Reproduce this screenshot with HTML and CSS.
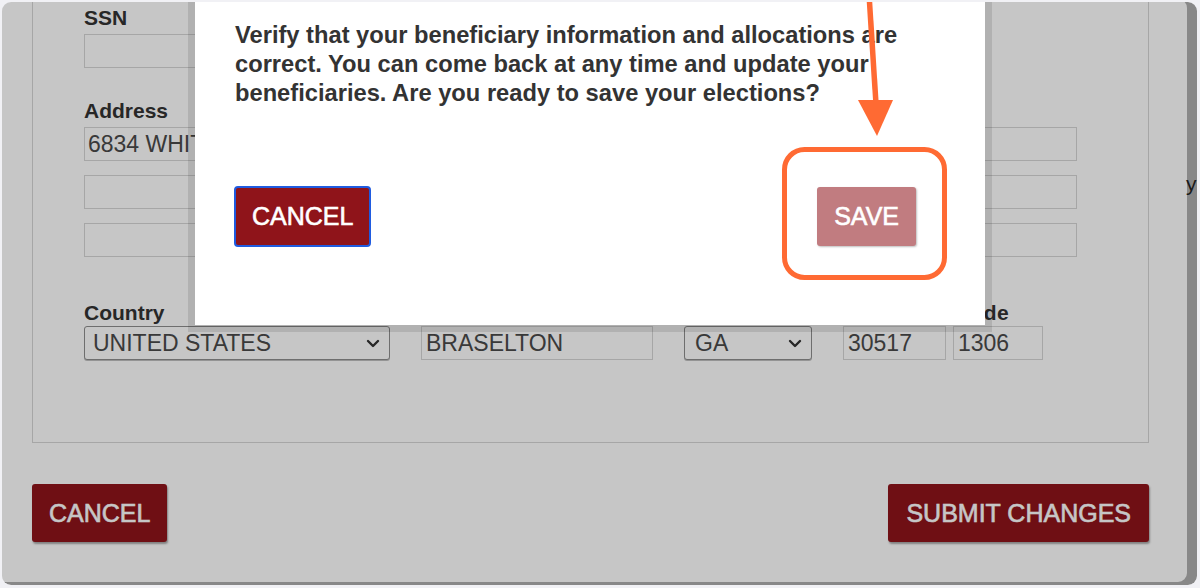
FILE: index.html
```html
<!DOCTYPE html>
<html lang="en">
<head>
<meta charset="utf-8">
<title>Beneficiaries</title>
<link rel="stylesheet" href="styles.css">
</head>
<body>
<div class="frame">
  <div class="page">
    <div class="main">
      <section class="panel">
        <div class="field">
          <label class="lbl">SSN</label>
          <input class="inp ssn" type="text" value="">
        </div>
        <div class="field address">
          <label class="lbl">Address</label>
          <input class="inp wide" type="text" value="6834 WHITEHALL DR">
          <input class="inp wide gap" type="text" value="">
          <input class="inp wide gap" type="text" value="">
        </div>
        <div class="geo">
          <div class="col">
            <label class="lbl">Country</label>
            <div class="select w-country"><span>UNITED STATES</span><svg class="chev" viewBox="0 0 14 9" width="14" height="9"><polyline points="2,2 7,7 12,2"/></svg></div>
          </div>
          <div class="col">
            <label class="lbl">City</label>
            <input class="inp w-city" type="text" value="BRASELTON">
          </div>
          <div class="col">
            <label class="lbl">State</label>
            <div class="select w-state"><span>GA</span><svg class="chev" viewBox="0 0 14 9" width="14" height="9"><polyline points="2,2 7,7 12,2"/></svg></div>
          </div>
          <div class="col">
            <label class="lbl lbl-zip">Zip/Postal Code</label>
            <div class="zip-pair">
              <input class="inp w-zip" type="text" value="30517">
              <input class="inp w-zip4" type="text" value="1306">
            </div>
          </div>
        </div>
      </section>
      <div class="actions">
        <button class="btn">CANCEL</button>
        <button class="btn btn-wide">SUBMIT CHANGES</button>
      </div>
    </div>
    <aside class="aside">y</aside>
  </div>

  <div class="overlay"></div>

  <div class="modal">
    <p class="modal-text">Verify that your beneficiary information and allocations are correct. You can come back at any time and update your beneficiaries. Are you ready to save your elections?</p>
    <div class="modal-footer">
      <button class="btn btn-focus">CANCEL</button>
      <button class="btn btn-disabled">SAVE</button>
    </div>
  </div>

  <svg class="annot" viewBox="0 0 1200 588" width="1200" height="588">
    <line x1="869" y1="-6" x2="876" y2="104" class="arrow-line"/>
    <polygon points="858,100 893,100 877,136" class="arrow-head"/>
    <rect x="784.5" y="149.5" width="160" height="128" rx="20" class="highlight"/>
  </svg>
</div>
</body>
</html>
```

FILE: styles.css
```css
html, body {
  margin: 0;
  padding: 0;
}

body {
  background: #f1f1f5;
  font-family: "Liberation Sans", Arial, Helvetica, sans-serif;
  overflow: hidden;
}

.frame {
  position: relative;
  margin: 2px 0 0 2px;
  width: 1195px;
  height: 583px;
  border-radius: 9px;
  overflow: hidden;
  background: #ffffff;
}

.frame::after {
  content: "";
  position: absolute;
  inset: 0;
  border-radius: inherit;
  box-shadow: inset -10px -3px 0 rgba(0, 0, 0, 0.31);
  pointer-events: none;
  z-index: 20;
}

/* page behind the dialog */
.page {
  display: flex;
  align-items: flex-start;
  gap: 38px;
  padding-left: 30px;
  margin-top: -20px;
}

.main {
  flex: none;
  width: 1117px;
}

.panel {
  border: 1px solid #d6d6d6;
  padding: 23px 0 82px 51px;
}

.lbl {
  display: block;
  font-weight: bold;
  font-size: 21px;
  line-height: 24px;
  color: #333333;
  margin-bottom: 4px;
  white-space: nowrap;
}

.lbl-zip {
  letter-spacing: 0.5px;
}

.field.address {
  margin-top: 31px;
}

.inp {
  display: block;
  box-sizing: border-box;
  height: 34px;
  border: 1px solid #d6d6d6;
  border-radius: 0;
  background: #ffffff;
  padding: 0 4px;
  margin: 0;
  font-family: "Liberation Sans", Arial, sans-serif;
  font-size: 23px;
  color: #4a4a4a;
  outline: none;
}

.ssn {
  width: 300px;
}

.wide {
  width: 993px;
  padding-left: 3px;
}

.wide.gap {
  margin-top: 14px;
}

.geo {
  display: flex;
  gap: 31px;
  margin-top: 44px;
}

.geo .lbl {
  margin-bottom: 1px;
}

.select {
  box-sizing: border-box;
  height: 34px;
  display: flex;
  align-items: center;
  justify-content: space-between;
  border: 1px solid #8e8e8e;
  border-radius: 3px;
  box-shadow: 0 1px 0 rgba(0, 0, 0, 0.25);
  background: #ffffff;
  padding: 0 9px 0 8px;
  font-size: 23px;
  color: #4a4a4a;
}

.chev polyline {
  fill: none;
  stroke: #333333;
  stroke-width: 2.4;
  stroke-linecap: round;
  stroke-linejoin: round;
}

.w-country { width: 306px; }
.w-city { width: 232px; }
.w-state { width: 128px; padding-left: 10px; }
.w-zip { width: 103px; }
.w-zip4 { width: 90px; }

.zip-pair {
  display: flex;
  gap: 7px;
}

.actions {
  display: flex;
  justify-content: space-between;
  margin-top: 41px;
}

.btn {
  border: 0;
  border-radius: 3px;
  background: #8f141a;
  color: #ffffff;
  font-family: "Liberation Sans", Arial, sans-serif;
  font-weight: normal;
  font-size: 25px;
  -webkit-text-stroke: 0.6px #ffffff;
  line-height: 28px;
  padding: 15px 17px;
  margin: 0;
  box-shadow: 1px 2px 2px rgba(0, 0, 0, 0.35);
  white-space: nowrap;
}

.btn-wide {
  padding: 15px 18px;
}

.aside {
  flex: none;
  padding-top: 190px;
  margin-left: -1px;
  font-size: 21px;
  line-height: 24px;
  color: #333333;
  white-space: nowrap;
}

/* dim layer */
.overlay {
  position: absolute;
  inset: 0;
  background: rgba(0, 0, 0, 0.224);
}

/* dialog */
.modal {
  position: absolute;
  left: 193px;
  top: -20px;
  width: 790px;
  box-sizing: border-box;
  background: #ffffff;
  box-shadow: 0 0 0 7px rgba(0, 0, 0, 0.1);
  padding: 39px 69px 78px 40px;
}

.modal-text {
  margin: 0;
  font-weight: bold;
  font-size: 23.7px;
  line-height: 29px;
  color: #333333;
}

.modal-footer {
  display: flex;
  justify-content: space-between;
  align-items: center;
  margin-top: 78px;
  margin-left: -1px;
}

.btn-focus {
  border: 2px solid #1f5be0;
  border-radius: 4px;
  padding: 14px 16px;
  line-height: 29px;
  box-shadow: none;
}

.btn-disabled {
  background: #c17c80;
  padding: 15px 17px;
  line-height: 29px;
  box-shadow: 1px 1px 2px rgba(0, 0, 0, 0.25);
}

/* annotation drawn on top of the screenshot */
.annot {
  position: absolute;
  left: -2px;
  top: -2px;
  overflow: visible;
  pointer-events: none;
  z-index: 15;
}

.arrow-line {
  stroke: #ff6a33;
  stroke-width: 5.5;
}

.arrow-head {
  fill: #ff6a33;
}

.highlight {
  fill: none;
  stroke: #ff6a33;
  stroke-width: 5;
}
```
